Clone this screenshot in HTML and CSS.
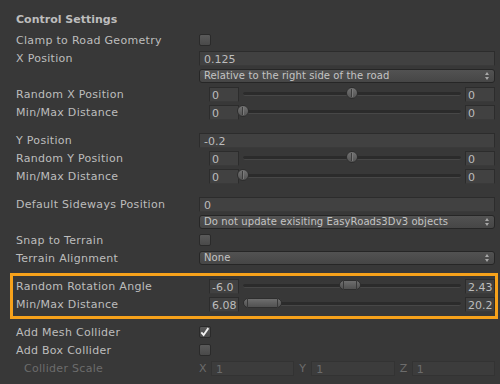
FILE: index.html
```html
<!DOCTYPE html>
<html>
<head>
  <meta charset="utf-8">
  <title>Control Settings</title>
  <link rel="stylesheet" href="styles.css">
</head>
<body>

<div class="inspector">
  <div class="header">Control Settings</div>

  <div class="row">
    <span class="label">Clamp to Road Geometry</span>
    <div class="control"><span class="toggle"></span></div>
  </div>
  <div class="row">
    <span class="label">X Position</span>
    <div class="control"><span class="field">0.125</span></div>
  </div>
  <div class="row">
    <span class="label"></span>
    <div class="control"><span class="popup">Relative to the right side of the road</span></div>
  </div>
  <div class="row">
    <span class="label">Random X Position</span>
    <div class="control sliders">
      <span class="field small">0</span>
      <span class="track"><span class="thumb" style="left:50%"></span></span>
      <span class="field small">0</span>
    </div>
  </div>
  <div class="row">
    <span class="label">Min/Max Distance</span>
    <div class="control sliders">
      <span class="field small">0</span>
      <span class="track"><span class="thumb" style="left:0%"></span></span>
      <span class="field small">0</span>
    </div>
  </div>

  <div class="spacer"></div>

  <div class="row">
    <span class="label">Y Position</span>
    <div class="control"><span class="field">-0.2</span></div>
  </div>
  <div class="row">
    <span class="label">Random Y Position</span>
    <div class="control sliders">
      <span class="field small">0</span>
      <span class="track"><span class="thumb" style="left:50%"></span></span>
      <span class="field small">0</span>
    </div>
  </div>
  <div class="row">
    <span class="label">Min/Max Distance</span>
    <div class="control sliders">
      <span class="field small">0</span>
      <span class="track"><span class="thumb" style="left:0%"></span></span>
      <span class="field small">0</span>
    </div>
  </div>

  <div class="spacer"></div>

  <div class="row">
    <span class="label">Default Sideways Position</span>
    <div class="control"><span class="field">0</span></div>
  </div>
  <div class="row">
    <span class="label"></span>
    <div class="control"><span class="popup">Do not update exisiting EasyRoads3Dv3 objects</span></div>
  </div>
  <div class="row">
    <span class="label">Snap to Terrain</span>
    <div class="control"><span class="toggle"></span></div>
  </div>
  <div class="row">
    <span class="label">Terrain Alignment</span>
    <div class="control"><span class="popup">None</span></div>
  </div>

  <div class="highlight">
    <div class="row">
      <span class="label">Random Rotation Angle</span>
      <div class="control sliders">
        <span class="field small">-6.0</span>
        <span class="track"><span class="range" style="left:44%;width:10%"></span></span>
        <span class="field small">2.43</span>
      </div>
    </div>
    <div class="row">
      <span class="label">Min/Max Distance</span>
      <div class="control sliders">
        <span class="field small">6.08</span>
        <span class="track"><span class="range" style="left:0%;width:18%"></span></span>
        <span class="field small">20.2</span>
      </div>
    </div>
  </div>

  <div class="row">
    <span class="label">Add Mesh Collider</span>
    <div class="control">
      <span class="toggle on">
        <svg width="12" height="12" viewBox="0 0 12 12"><path d="M2.5 6.5 L5 9.2 L10.2 1.8" fill="none" stroke="#f2f2f2" stroke-width="2"/></svg>
      </span>
    </div>
  </div>
  <div class="row">
    <span class="label">Add Box Collider</span>
    <div class="control"><span class="toggle"></span></div>
  </div>
  <div class="row disabled">
    <span class="label indent">Collider Scale</span>
    <div class="control vector">
      <span class="axis"><span class="axis-name">X</span><span class="field">1</span></span>
      <span class="axis"><span class="axis-name">Y</span><span class="field">1</span></span>
      <span class="axis"><span class="axis-name">Z</span><span class="field">1</span></span>
    </div>
  </div>
</div>

</body>
</html>
```

FILE: styles.css
```css
html, body {
  margin: 0;
  background-color: #383838;
}
body {
  font-family: "DejaVu Sans", sans-serif;
  font-size: 11px;
  color: #bdbdbd;
}
.inspector {
  padding: 11px 5px 0 16px;
}
.header {
  height: 18px;
  line-height: 18px;
  font-weight: bold;
  margin-bottom: 2px;
}
.row {
  display: flex;
  align-items: center;
  height: 18px;
}
.label {
  width: 183px;
  flex: none;
  white-space: nowrap;
  letter-spacing: 0.3px;
}
.label.indent {
  padding-left: 8px;
  width: 175px;
}
.control {
  flex: 1;
  display: flex;
  align-items: center;
  min-width: 0;
}
.spacer {
  height: 10px;
}

/* text fields */
.field {
  flex: 1;
  height: 15px;
  line-height: 15px;
  box-sizing: border-box;
  padding-left: 4px;
  background-color: #414141;
  border: 1px solid #2c2c2c;
  border-bottom-color: #3a3a3a;
  white-space: nowrap;
  overflow: hidden;
}
.field.small {
  flex: none;
  width: 30px;
  padding-left: 2px;
}

/* popups */
.popup {
  flex: 1;
  position: relative;
  height: 14px;
  line-height: 12px;
  box-sizing: border-box;
  padding-left: 4px;
  border: 1px solid #262626;
  border-radius: 3px;
  background: linear-gradient(#525252, #464646);
  color: #c4c4c4;
  font-size: 10px;
  letter-spacing: 0.1px;
  white-space: nowrap;
}
.popup::before,
.popup::after {
  content: "";
  position: absolute;
  right: 5px;
  border-left: 2px solid transparent;
  border-right: 2px solid transparent;
}
.popup::before {
  top: 2px;
  border-bottom: 3px solid #a8a8a8;
}
.popup::after {
  top: 7px;
  border-top: 3px solid #a8a8a8;
}

/* toggles */
.toggle {
  width: 12px;
  height: 12px;
  box-sizing: border-box;
  border: 1px solid #2a2a2a;
  border-radius: 2px;
  background: linear-gradient(#5a5a5a, #4a4a4a);
  display: flex;
}
.toggle svg {
  margin: -1px 0 0 -1px;
}

/* sliders */
.sliders {
  padding-left: 10px;
  gap: 4px;
}
.track {
  flex: 1;
  position: relative;
  height: 3px;
  border-radius: 2px;
  background-color: #2b2b2b;
  border-bottom: 1px solid #474747;
}
.thumb {
  position: absolute;
  top: -5px;
  width: 12px;
  height: 12px;
  margin-left: -6px;
  box-sizing: border-box;
  border-radius: 50%;
  border: 1px solid #2e2e2e;
  background: linear-gradient(#737373, #545454);
}
.thumb::after {
  content: "";
  position: absolute;
  left: 4px;
  top: 1px;
  width: 1px;
  height: 8px;
  background-color: #3c3c3c;
  border-right: 1px solid #7a7a7a;
}
.range {
  position: absolute;
  top: -4px;
  height: 10px;
  box-sizing: border-box;
  border-radius: 5px;
  border: 1px solid #2e2e2e;
  background: linear-gradient(#6e6e6e, #515151);
}
.range::before,
.range::after {
  content: "";
  position: absolute;
  top: -1px;
  width: 1px;
  height: 10px;
  background-color: #383838;
}
.range::before {
  left: 3px;
}
.range::after {
  right: 3px;
}

/* vector field */
.vector {
  gap: 5px;
}
.axis {
  flex: 1;
  display: flex;
  align-items: center;
}
.axis-name {
  width: 12px;
  flex: none;
}
.disabled {
  color: #6c6c6c;
}
.disabled .field {
  background-color: #3c3c3c;
  border-color: #333333;
}

/* annotation */
.highlight {
  margin: 6px -3px 4px -6px;
  padding: 1px 0 3px 3px;
  border: 3px solid #f7a21b;
}
```
